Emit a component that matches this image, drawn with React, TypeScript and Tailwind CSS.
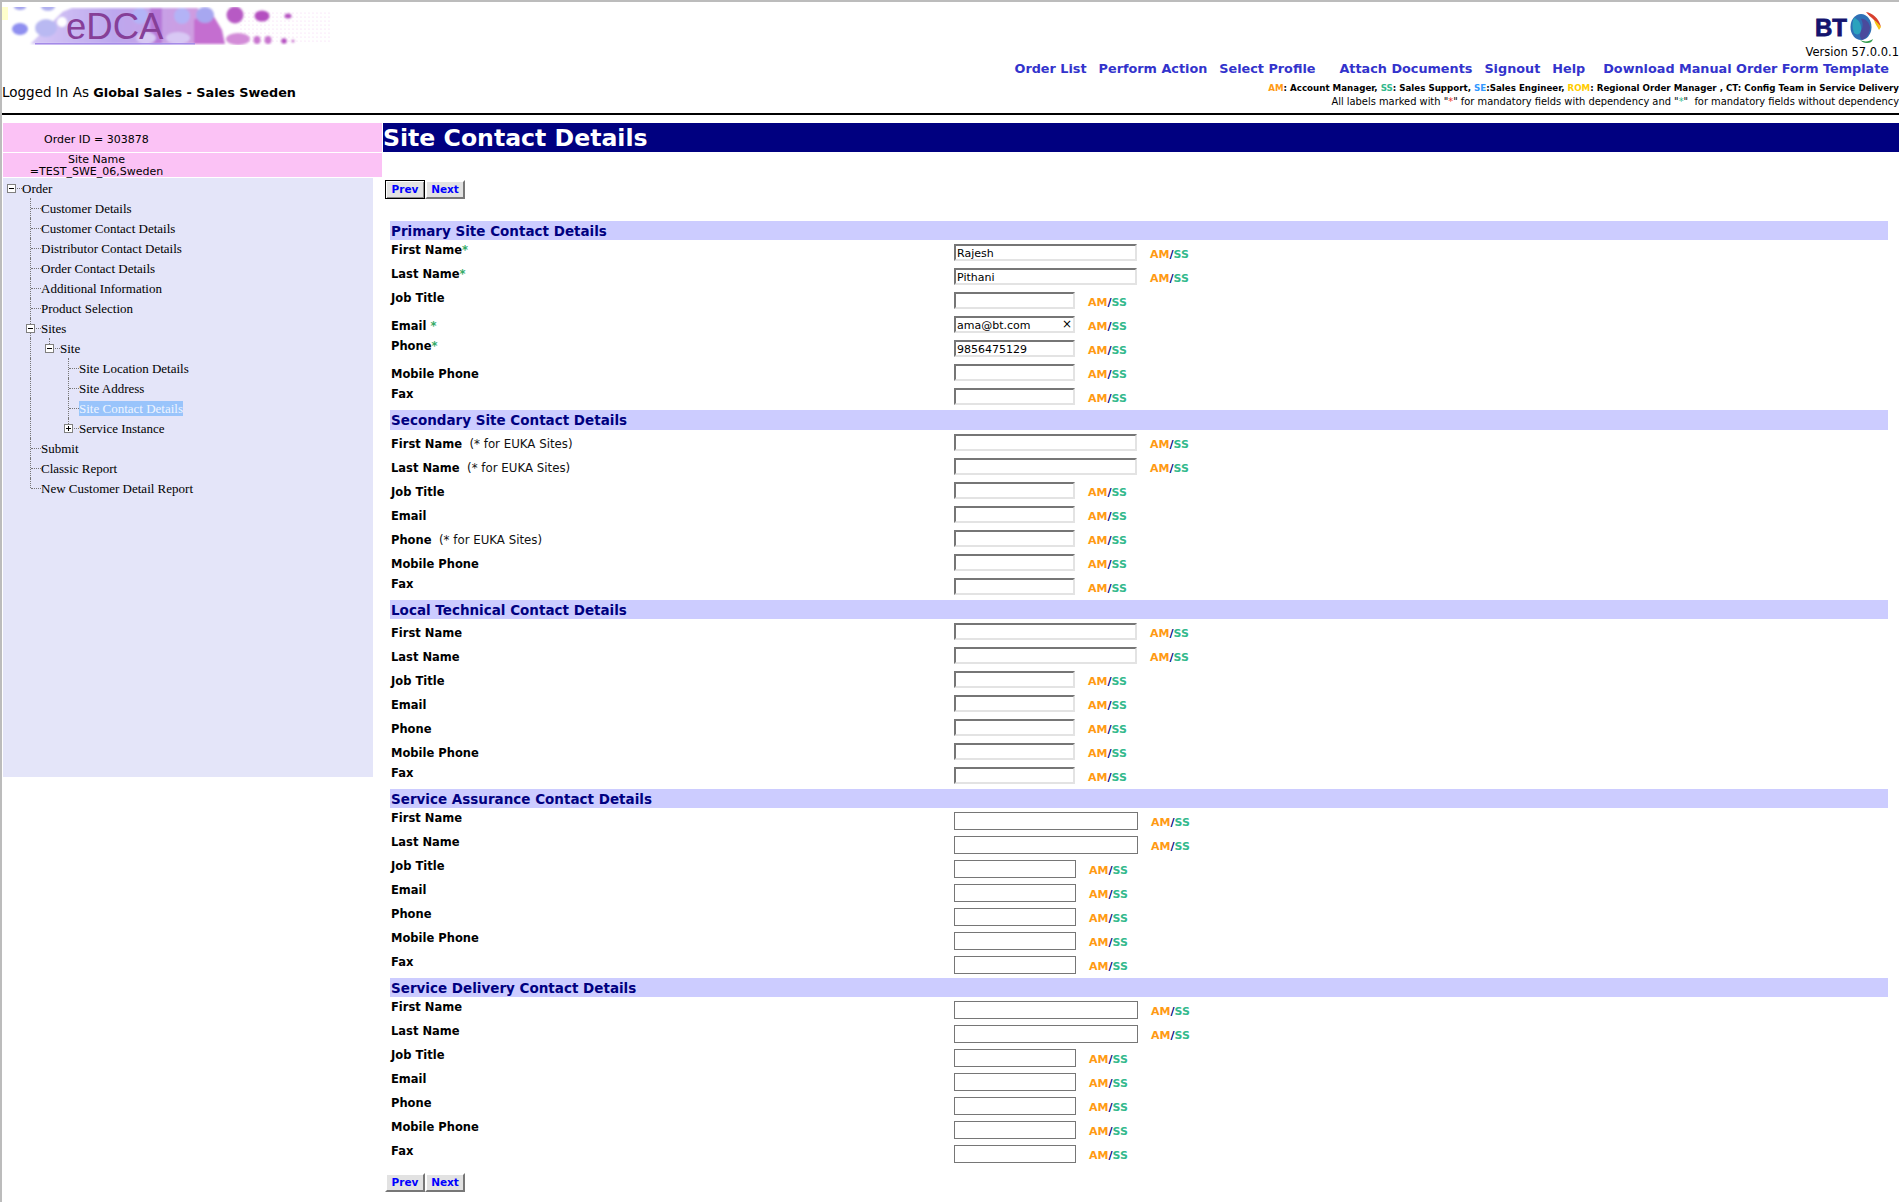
import type { ReactNode } from 'react'

type TreeNode = {
  label: string
  depth: number
  toggle?: '-' | '+'
  guides: number[]
  last?: boolean
  selected?: boolean
}

type Field = {
  label: string
  hint?: string
  star?: string
  value?: string
  wide?: boolean
  low?: boolean
  clear?: boolean
}

type Section = {
  title: string
  solid?: boolean
  tall?: boolean
  fields: Field[]
}

const tree: TreeNode[] = [
  { label: 'Order', depth: 0, toggle: '-', guides: [] },
  { label: 'Customer Details', depth: 1, guides: [] },
  { label: 'Customer Contact Details', depth: 1, guides: [] },
  { label: 'Distributor Contact Details', depth: 1, guides: [] },
  { label: 'Order Contact Details', depth: 1, guides: [] },
  { label: 'Additional Information', depth: 1, guides: [] },
  { label: 'Product Selection', depth: 1, guides: [] },
  { label: 'Sites', depth: 1, toggle: '-', guides: [] },
  { label: 'Site', depth: 2, toggle: '-', guides: [1], last: true },
  { label: 'Site Location Details', depth: 3, guides: [1] },
  { label: 'Site Address', depth: 3, guides: [1] },
  { label: 'Site Contact Details', depth: 3, guides: [1], selected: true },
  { label: 'Service Instance', depth: 3, toggle: '+', guides: [1], last: true },
  { label: 'Submit', depth: 1, guides: [] },
  { label: 'Classic Report', depth: 1, guides: [] },
  { label: 'New Customer Detail Report', depth: 1, guides: [], last: true },
]

const sections: Section[] = [
  {
    title: 'Primary Site Contact Details',
    fields: [
      { label: 'First Name', star: '*', value: 'Rajesh', wide: true },
      { label: 'Last Name', star: '*', value: 'Pithani', wide: true },
      { label: 'Job Title' },
      { label: 'Email', star: ' *', value: 'ama@bt.com', low: true, clear: true },
      { label: 'Phone', star: '*', value: '9856475129' },
      { label: 'Mobile Phone', low: true },
      { label: 'Fax' },
    ],
  },
  {
    title: 'Secondary Site Contact Details',
    tall: true,
    fields: [
      { label: 'First Name', hint: '(* for EUKA Sites)', wide: true, low: true },
      { label: 'Last Name', hint: '(* for EUKA Sites)', wide: true, low: true },
      { label: 'Job Title', low: true },
      { label: 'Email', low: true },
      { label: 'Phone', hint: '(* for EUKA Sites)', low: true },
      { label: 'Mobile Phone', low: true },
      { label: 'Fax' },
    ],
  },
  {
    title: 'Local Technical Contact Details',
    fields: [
      { label: 'First Name', wide: true, low: true },
      { label: 'Last Name', wide: true, low: true },
      { label: 'Job Title', low: true },
      { label: 'Email', low: true },
      { label: 'Phone', low: true },
      { label: 'Mobile Phone', low: true },
      { label: 'Fax' },
    ],
  },
  {
    title: 'Service Assurance Contact Details',
    solid: true,
    fields: [
      { label: 'First Name', wide: true },
      { label: 'Last Name', wide: true },
      { label: 'Job Title' },
      { label: 'Email' },
      { label: 'Phone' },
      { label: 'Mobile Phone' },
      { label: 'Fax' },
    ],
  },
  {
    title: 'Service Delivery Contact Details',
    solid: true,
    fields: [
      { label: 'First Name', wide: true },
      { label: 'Last Name', wide: true },
      { label: 'Job Title' },
      { label: 'Email' },
      { label: 'Phone' },
      { label: 'Mobile Phone' },
      { label: 'Fax' },
    ],
  },
]

function EdcaLogo() {
  return (
    <div className="relative h-[38px] w-[332px]">
      <svg viewBox="8 7 332 38" className="h-[38px] w-[332px]" aria-hidden="true">
        <defs>
          <filter id="soft">
            <feGaussianBlur stdDeviation="1.1" />
          </filter>
          <linearGradient id="wash" x1="0" x2="1" y1="0" y2="0">
            <stop offset="0" stopColor="#d6c8f6" />
            <stop offset="0.5" stopColor="#bda8ee" />
            <stop offset="1" stopColor="#cf9be0" />
          </linearGradient>
          <pattern id="dots" width="4" height="4" patternUnits="userSpaceOnUse">
            <circle cx="1" cy="1" r="0.6" fill="#ecb8ea" />
          </pattern>
        </defs>
        <rect x="240" y="10" width="92" height="33" fill="url(#dots)" opacity="0.7" />
        <g filter="url(#soft)">
          <path d="M30 44 L62 12 L72 8 H198 V44 Z" fill="url(#wash)" />
          <path d="M30 44 L62 12 L56 8 L30 8Z" fill="#fff" />
          <ellipse cx="20" cy="7" rx="6" ry="3" fill="#a3a3ee" />
          <ellipse cx="48" cy="7" rx="7" ry="4" fill="#b0b0f0" />
          <ellipse cx="20" cy="29" rx="8" ry="6" fill="#8f8ff0" />
          <ellipse cx="46" cy="28" rx="11" ry="9" fill="#b9b9f2" />
          <ellipse cx="62" cy="22" rx="5" ry="5" fill="#fff" />
          <circle cx="140" cy="16" r="8" fill="#b3b3f6" />
          <circle cx="182" cy="16" r="8" fill="#b3b3f6" />
          <path d="M150 8 H162 V44 H150 Z" fill="#b678d8" />
          <path d="M194 44 V20 L210 10 L222 30 L225 44 Z" fill="#c46ed0" />
          <ellipse cx="205" cy="15" rx="9" ry="8" fill="#a7a7f0" />
          <ellipse cx="178" cy="38" rx="12" ry="6" fill="#d8c8f4" />
          <ellipse cx="146" cy="38" rx="10" ry="6" fill="#d8c8f4" />
          <circle cx="235" cy="15" r="8.5" fill="#b75ac4" />
          <ellipse cx="238" cy="39" rx="12" ry="6" fill="#d38cd8" />
          <ellipse cx="262" cy="16" rx="7.5" ry="5.5" fill="#b44fc0" />
          <ellipse cx="257" cy="40" rx="3.5" ry="4" fill="#c875cf" />
          <ellipse cx="268" cy="40" rx="3.5" ry="4" fill="#c875cf" />
          <ellipse cx="288" cy="16" rx="3.5" ry="2.5" fill="#b44fc0" />
          <circle cx="284" cy="41" r="2.8" fill="#b44fc0" />
          <circle cx="293" cy="41" r="1.6" fill="#c875cf" />
        </g>
        <rect x="35" y="43" width="160" height="1.5" fill="#a48ae8" />
      </svg>
      <span className="absolute top-[1px] left-[58px] font-['Liberation_Sans',sans-serif] text-[36.5px] leading-[38px] text-[#863f98]">
        eDCA
      </span>
    </div>
  )
}

function BtLogo() {
  return (
    <div className="flex items-center gap-[2px]">
      <span className="mt-[2px] font-['Liberation_Sans',sans-serif] text-[24px] leading-none font-bold text-[#14146e] [-webkit-text-stroke:0.8px_#14146e]">
        BT
      </span>
      <svg viewBox="0 0 34 32" className="h-8 w-[34px]" aria-hidden="true">
        <ellipse cx="12" cy="16" rx="10.5" ry="13" fill="#2f6fb5" />
        <path d="M5 7c5 1 8 7 7 14-2 3-5 3-7 1C3 17 3 11 5 7Z" fill="#2aa2bd" />
        <path d="M12 8c4-1 8 3 9 8 0 6-3 11-8 13-3-3-2-8 0-11 1-3 1-7-1-10Z" fill="#4a4a9c" />
        <path d="M17 1c6 1 13 6 15 15-3-2-5-5-8-8-2-2-5-4-7-7Z" fill="#d8402e" />
        <path d="M25 9c3 2 5 4 7 7l-2 3c-2-4-4-6-5-10Z" fill="#f3c316" />
        <path d="M11 29c4 2 9 2 13-1-1 3-3 4-6 4-3 0-5-1-7-3Z" fill="#2f9a4a" />
      </svg>
    </div>
  )
}

function Guide({ half }: { half?: boolean }) {
  return (
    <span
      className={`absolute top-0 left-[8px] w-0 border-l border-dotted border-[#777] ${half ? 'h-[10px]' : 'h-full'}`}
    />
  )
}

function Toggle({ kind }: { kind: '-' | '+' }) {
  return (
    <span className="absolute top-[6px] left-[4px] flex h-[9px] w-[9px] items-center justify-center border border-[#808080] bg-white">
      <span className="relative block h-px w-[5px] bg-black">
        {kind === '+' && <span className="absolute top-[-2px] left-[2px] block h-[5px] w-px bg-black" />}
      </span>
    </span>
  )
}

function TreeRow({ node }: { node: TreeNode }) {
  const cells: ReactNode[] = []
  for (let i = 0; i < node.depth; i++) {
    cells.push(
      <span key={i} className="relative h-5 w-[19px] shrink-0">
        {node.guides.includes(i) && <Guide />}
      </span>,
    )
  }
  return (
    <div className="flex h-5 items-center">
      {cells}
      <span className="relative h-5 w-[19px] shrink-0">
        {node.depth > 0 && <Guide half={node.last} />}
        <span className="absolute top-[10px] left-[9px] w-[10px] border-t border-dotted border-[#777]" />
        {node.toggle && <Toggle kind={node.toggle} />}
      </span>
      <span
        className={`font-['Liberation_Serif',serif] text-[13px] leading-[15px] whitespace-nowrap ${
          node.selected ? 'bg-[#99c4fb] text-[#eef4ff]' : 'text-black'
        }`}
      >
        {node.label}
      </span>
    </div>
  )
}

function RoleTag() {
  return (
    <span className="text-[11px] font-bold whitespace-nowrap">
      <span className="text-[#ff9a14]">AM</span>
      <span className="text-[#000080]">/</span>
      <span className="text-[#33b98c]">SS</span>
    </span>
  )
}

function FieldRow({ field, solid }: { field: Field; solid?: boolean }) {
  const size = solid
    ? field.wide
      ? 'w-[184px]'
      : 'w-[122px]'
    : field.wide
      ? 'w-[183px]'
      : 'w-[121px]'
  const box = solid
    ? 'h-[18px] border border-[#767676]'
    : 'h-[17px] border-2 border-t-[#767676] border-r-[#e3e3e3] border-b-[#e3e3e3] border-l-[#767676] pt-[2px]'
  return (
    <div className="flex h-6 items-start">
      <div className={`w-[564px] shrink-0 pl-px text-[11.5px] leading-4 whitespace-pre ${field.low ? 'pt-[5px]' : 'pt-px'}`}>
        <span className="font-bold text-black">{field.label}</span>
        {field.star && <span className="font-bold text-[#33aa66]">{field.star}</span>}
        {field.hint && <span className="text-[11.8px] text-[#111]">{'  ' + field.hint}</span>}
      </div>
      <div className={`relative mt-[3px] shrink-0 ${size}`}>
        <input
          readOnly
          defaultValue={field.value}
          className={`block w-full bg-white px-px text-[11px] leading-none text-black outline-none ${box}`}
        />
        {field.clear && <span className="absolute top-[1px] right-[3px] text-[12px] leading-[14px] text-black">×</span>}
      </div>
      <div className="mt-1 ml-[13px] leading-[16px]">
        <RoleTag />
      </div>
    </div>
  )
}

function NavButtons({ focused }: { focused?: boolean }) {
  return (
    <div className="flex">
      <button
        className={`h-[19px] w-10 bg-[#e2e2e2] text-[10.5px] font-bold text-[#0000ff] ${
          focused
            ? 'border border-black shadow-[inset_1px_1px_0_#fff,inset_-1px_-1px_0_#888]'
            : 'border-2 border-t-white border-r-[#777] border-b-[#777] border-l-white'
        }`}
      >
        Prev
      </button>
      <button className="h-[19px] w-10 border-2 border-t-white border-r-[#777] border-b-[#777] border-l-white bg-[#e2e2e2] text-[10.5px] font-bold text-[#0000ff]">
        Next
      </button>
    </div>
  )
}

export default function App() {
  return (
    <div className="h-[1202px] overflow-hidden border-t-2 border-l-2 border-[#bcbcbc] bg-white font-['DejaVu_Sans',Verdana,sans-serif] text-black">
      <header className="flex h-[111px] justify-between">
        <div className="flex flex-col pt-[5px]">
          <div className="flex">
            <span className="h-[13px] w-[6px] bg-[#ffffcc]" />
            <EdcaLogo />
          </div>
          <p className="mt-[39px] leading-4 whitespace-pre">
            <span className="text-[13.5px]">Logged In As </span>
            <b className="text-[12.8px]">Global Sales - Sales Sweden</b>
          </p>
        </div>
        <div className="flex flex-col items-end">
          <div className="mt-[9px] mr-[16px]">
            <BtLogo />
          </div>
          <p className="mt-[2px] text-[11.5px] leading-[14px] whitespace-nowrap">Version 57.0.0.1</p>
          <nav className="mt-[1px] mr-[10px] flex text-[12.8px] leading-[17px] font-bold whitespace-nowrap text-[#3333cc]">
            <a>Order List</a>
            <a className="ml-3">Perform Action</a>
            <a className="ml-3">Select Profile</a>
            <a className="ml-6">Attach Documents</a>
            <a className="ml-3">Signout</a>
            <a className="ml-3">Help</a>
            <a className="ml-[18px]">Download Manual Order Form Template</a>
          </nav>
          <p className="mt-[5px] text-[8.7px] leading-[13px] font-bold whitespace-pre">
            <span className="text-[#ff9a14]">AM</span>: Account Manager, <span className="text-[#33b98c]">SS</span>: Sales Support,{' '}
            <span className="text-[#3399ff]">SE</span>:Sales Engineer, <span className="text-[#ffcc00]">ROM</span>: Regional Order Manager , CT: Config Team in Service Delivery
          </p>
          <p className="text-[9.9px] leading-[13px] whitespace-pre">
            All labels marked with "<span className="text-[#e33]">*</span>" for mandatory fields with dependency and "<span className="text-[#33b98c]">*</span>"  for mandatory fields without dependency
          </p>
        </div>
      </header>
      <div className="h-0.5 bg-black" />

      <div className="mt-2 flex">
        <aside className="w-[381px] shrink-0">
          <div className="ml-px flex h-[29px] w-[379px] items-center bg-[#fbc2f5] pt-[5px] pl-[41px] text-[11px]">
            Order ID = 303878
          </div>
          <div className="mt-px ml-px h-[24px] w-[379px] bg-[#fbc2f5] pr-[192px] text-center text-[11px] leading-3">
            <div className="pt-[1px]">Site Name</div>
            <div>=TEST_SWE_06,Sweden</div>
          </div>
          <div className="mt-px ml-px h-[599px] w-[370px] bg-[#e4e5f9]">
            {tree.map((node) => (
              <TreeRow key={node.label} node={node} />
            ))}
          </div>
        </aside>

        <main className="min-w-0 flex-1">
          <h1 className="flex h-[29px] items-center bg-[#000080] pt-[3px] text-[23.6px] leading-none font-bold text-white">
            Site Contact Details
          </h1>
          <div className="mt-7 ml-[2px]">
            <NavButtons focused />
          </div>
          <div className="mt-[22px] ml-[7px] w-[1498px]">
            {sections.map((section) => (
              <section key={section.title}>
                <h2
                  className={`bg-[#ccccff] pl-px text-[13.5px] font-bold text-[#000080] ${
                    section.tall ? 'h-5 leading-[21px]' : 'h-[19px] leading-[20px]'
                  }`}
                >
                  {section.title}
                </h2>
                <div className="py-px">
                  {section.fields.map((field) => (
                    <FieldRow key={field.label} field={field} solid={section.solid} />
                  ))}
                </div>
              </section>
            ))}
          </div>
          <div className="mt-[6px] ml-[2px]">
            <NavButtons />
          </div>
        </main>
      </div>
    </div>
  )
}
